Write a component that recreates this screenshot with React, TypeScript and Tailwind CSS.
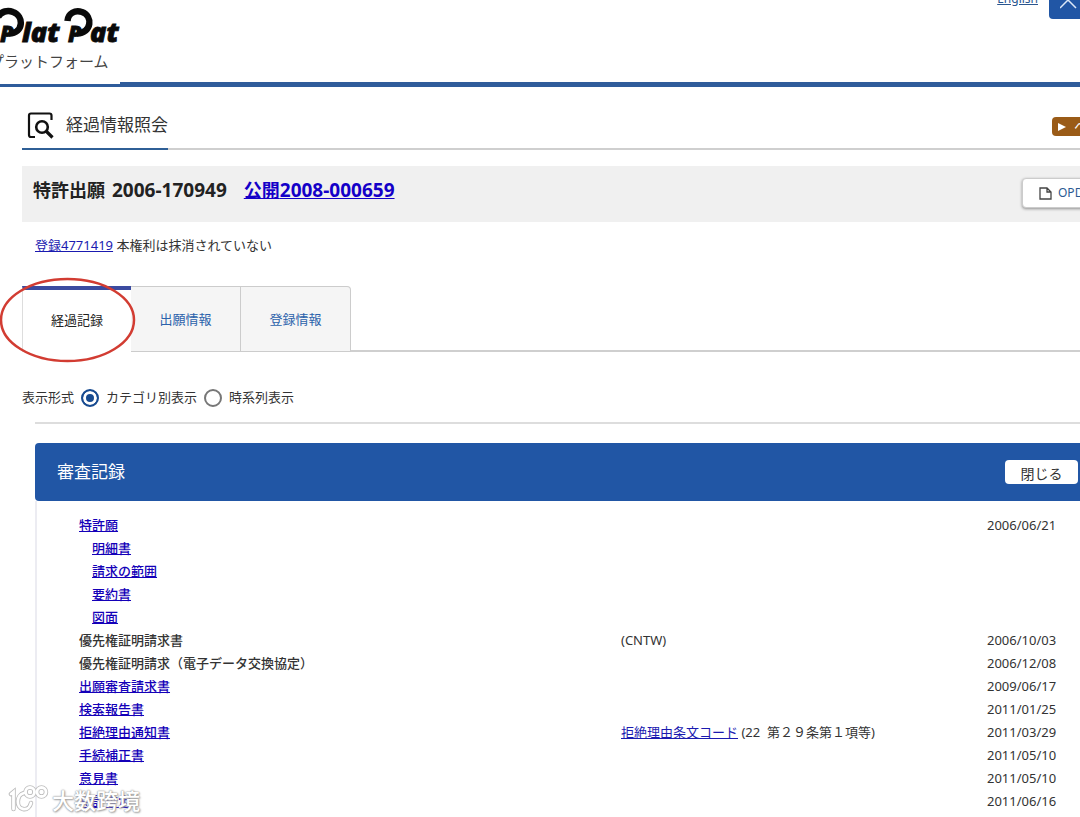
import { useState } from "react";

type RecordRow = {
  name: string;
  href?: string;
  indent?: boolean;
  code?: string;
  note?: string;
  date?: string;
};

const records: RecordRow[] = [
  { name: "特許願", href: "#application", date: "2006/06/21" },
  { name: "明細書", href: "#description", indent: true },
  { name: "請求の範囲", href: "#claims", indent: true },
  { name: "要約書", href: "#abstract", indent: true },
  { name: "図面", href: "#drawings", indent: true },
  { name: "優先権証明請求書", note: "(CNTW)", date: "2006/10/03" },
  { name: "優先権証明請求（電子データ交換協定）", date: "2006/12/08" },
  { name: "出願審査請求書", href: "#exam", date: "2009/06/17" },
  { name: "検索報告書", href: "#search", date: "2011/01/25" },
  {
    name: "拒絶理由通知書",
    href: "#refusal",
    code: "拒絶理由条文コード",
    note: " (22  第２９条第１項等)",
    date: "2011/03/29",
  },
  { name: "手続補正書", href: "#amendment", date: "2011/05/10" },
  { name: "意見書", href: "#opinion", date: "2011/05/10" },
  { name: "特許査定", href: "#grant", date: "2011/06/16" },
];

const tabs = ["経過記録", "出願情報", "登録情報"];
const modes = ["カテゴリ別表示", "時系列表示"];

function Logo() {
  return (
    <div className="h-[84px] w-[120px] overflow-hidden bg-white">
      <svg viewBox="0 0 120 49" className="block h-[49px] w-[120px]" role="img" aria-label="PlatPat">
        <g fill="none" stroke="#0a0a0a" strokeWidth="6.500">
          <path d="M-2 17 C1 11 8 10 13 12 C24 16 24 33 9 33.500" />
          <path d="M67.500 21 C68 13 75 10 82 12 C93 16 92 33 77 33.500" />
        </g>
        <g
          fill="#0a0a0a"
          stroke="#0a0a0a"
          strokeWidth="0.800"
          fontSize="27"
          fontWeight="900"
          fontStyle="italic"
          fontFamily="'Noto Sans','Open Sans',sans-serif"
        >
          <text x="0" y="42" fontSize="22">P</text>
          <text x="22" y="42">lat</text>
          <text x="68" y="42" fontSize="22">P</text>
          <text x="90" y="42">at</text>
        </g>
      </svg>
      <p className="-ml-[11px] whitespace-nowrap text-[15px] leading-6 text-[#444]">プラットフォーム</p>
    </div>
  );
}

function Header() {
  return (
    <header className="flex h-[87px] items-start border-b-[5px] border-[#2f5c9b]">
      <Logo />
      <div className="ml-auto flex items-start gap-[11px]">
        <a href="#english" className="-mt-[9px] text-[12px] leading-4 text-[#2b568f] underline">
          English
        </a>
        <button
          type="button"
          aria-label="トップへ"
          className="flex h-[19px] w-[31px] items-start overflow-hidden rounded-bl bg-[#2156a5] pl-[11px]"
        >
          <svg viewBox="0 0 18 10" className="h-[10px] w-[18px] shrink-0" fill="none" stroke="#dce8f8" strokeWidth="1.5">
            <path d="M0 8 L8 0 L16 8" />
          </svg>
        </button>
      </div>
    </header>
  );
}

function TitleBar() {
  return (
    <div className="flex h-[63px] items-start border-b-2 border-[#cfcfcf]">
      <h1 className="flex h-[63px] items-center gap-3 border-b-2 border-[#2f5f96] pl-[5px] pt-[15px] text-[17px] text-[#333]">
        <svg viewBox="0 0 27 27" className="size-[27px]" fill="none" stroke="#111" strokeWidth="2.200">
          <path d="M8 25 H4 Q2 25 2 23 V3.500 Q2 1.500 4 1.500 H22.500 Q24.500 1.500 24.500 3.500 V8" />
          <circle cx="15" cy="15" r="5.800" strokeWidth="2.600" />
          <path d="M19 19 L25.500 25.500" strokeWidth="3.200" />
        </svg>
        経過情報照会
      </h1>
      <button
        type="button"
        className="-mr-10 ml-auto mt-[30px] flex h-[19px] w-[68px] items-center gap-2 overflow-hidden whitespace-nowrap rounded bg-[#9a5b17] pl-[6px] text-[13px] text-white"
      >
        <svg viewBox="0 0 8 8" className="size-2 shrink-0" fill="#fff">
          <path d="M0 0 L8 4 L0 8 Z" />
        </svg>
        ヘルプ
      </button>
    </div>
  );
}

function Watermark() {
  return (
    <div className="pointer-events-none absolute bottom-1 left-[8px] flex h-[32px] items-center gap-[2px]">
      <svg viewBox="0 0 42 32" className="h-8 w-[42px]" fill="none" strokeLinecap="round">
        {["#bdbdbd", "#ffffff"].map((color, i) => (
          <g key={color} stroke={color} strokeWidth={i === 0 ? 4.5 : 2.8}>
            <path d="M3 10 L5.500 8 V25" />
            <path d="M16 9 C8 11 8 24 15 25 C19 26 22 23 23 19" />
            <circle cx="22" cy="8" r="4.500" />
            <circle cx="33.500" cy="8" r="4.500" />
          </g>
        ))}
      </svg>
      <span className="text-[22px] font-medium leading-8 text-white [text-shadow:0_0_1px_#999,0_0_2px_#999,1px_1px_2px_#aaa]">
        大数跨境
      </span>
    </div>
  );
}

export default function App() {
  const [tab, setTab] = useState(0);
  const [mode, setMode] = useState(0);
  const [open, setOpen] = useState(true);

  return (
    <div className="relative min-h-screen overflow-hidden bg-white font-['Noto_Sans','Noto_Sans_CJK_JP',sans-serif] text-[13px] text-[#333]">
      <Header />
      <main className="pl-[22px]">
        <TitleBar />

        <section className="mt-4 flex h-14 items-start bg-[#f0f0f0] pl-[11px]">
          <h2 className="flex items-baseline pt-[10px] text-[18px] font-bold leading-7 text-[#222]">
            特許出願
            <span className="ml-[7px] text-[19px]">2006-170949</span>
            <a href="#publication" className="ml-[17px] text-[#1400c8] underline">
              公開<span className="text-[19px]">2008-000659</span>
            </a>
          </h2>
          <button
            type="button"
            className="-mr-12 ml-auto mt-3 flex h-[30px] w-[106px] items-center gap-[6px] whitespace-nowrap rounded border border-[#ccc] bg-white pl-4 text-[12px] text-[#2b5a92] shadow-[0_1px_3px_rgba(0,0,0,0.4)]"
          >
            <svg viewBox="0 0 13 13" className="size-[13px] shrink-0" fill="none" stroke="#444" strokeWidth="1.300">
              <path d="M1 1 H8 L12 5 V12 H1 Z M8 1 V5 H12" />
            </svg>
            OPD照会
          </button>
        </section>

        <p className="mt-[13px] pl-[13px] leading-5">
          <a href="#registration" className="text-[#1a1ab0] underline">
            登録4771419
          </a>{" "}
          本権利は抹消されていない
        </p>

        <div className="relative mt-[31px] flex border-b-2 border-[#cfcfcf]" role="tablist">
          {tabs.map((label, i) => (
            <button
              key={label}
              type="button"
              role="tab"
              aria-selected={tab === i}
              onClick={() => setTab(i)}
              className={
                tab === i
                  ? "-mb-[2px] h-[66px] w-[109px] border-l border-t-4 border-l-[#ddd] border-t-[#3b4ba0] bg-white text-[#222]"
                  : "-mb-[2px] h-[66px] w-[110px] border border-l-0 border-[#ccc] bg-[#f5f5f5] pt-[2px] text-[#2b62ab] last-of-type:rounded-tr"
              }
            >
              {label}
            </button>
          ))}
          <svg
            viewBox="0 0 138 86"
            className="pointer-events-none absolute -left-[23px] -top-[9px] h-[86px] w-[138px]"
            fill="none"
            aria-hidden="true"
          >
            <ellipse cx="68.500" cy="43" rx="66.500" ry="41" stroke="#d23c32" strokeWidth="2.500" />
          </svg>
        </div>

        <fieldset className="mt-[34px] flex h-6 items-center">
          <legend className="sr-only">表示形式の選択</legend>
          <span className="mr-[7px]">表示形式</span>
          {modes.map((label, i) => (
            <label key={label} className="mr-[7px] flex items-center gap-[7px]">
              <input
                type="radio"
                name="mode"
                checked={mode === i}
                onChange={() => setMode(i)}
                className="size-[18px] appearance-none rounded-full border-2 border-[#777] bg-white checked:border-[#174a90] checked:bg-[#174a90] checked:shadow-[inset_0_0_0_3px_#fff]"
              />
              {label}
            </label>
          ))}
        </fieldset>

        <section className="ml-[13px] mt-3 border-t-2 border-[#ddd] pt-[19px]">
          <div className="flex h-[58px] items-center rounded-l-sm bg-[#2156a5] pl-[22px] pr-[2px]">
            <h3 className="text-[17px] text-white">審査記録</h3>
            <button
              type="button"
              onClick={() => setOpen(!open)}
              className="ml-auto h-6 w-[73px] rounded-sm bg-white pt-[3px] text-[14px] leading-5 text-[#333]"
            >
              閉じる
            </button>
          </div>
          {open && (
            <div className="border-l-2 border-[#ececf2] pb-2 pl-[42px] pt-3">
              <table className="w-full table-fixed text-left">
                <colgroup>
                  <col />
                  <col className="w-[366px]" />
                  <col className="w-[93px]" />
                </colgroup>
                <tbody>
                  {records.map((row) => (
                    <tr key={row.name} className="h-[23px]">
                      <td className={row.indent ? "p-0 pl-[13px] font-medium leading-5" : "p-0 font-medium leading-5"}>
                        {row.href ? (
                          <a href={row.href} className="text-[#1400b8] underline">
                            {row.name}
                          </a>
                        ) : (
                          row.name
                        )}
                      </td>
                      <td className="whitespace-pre p-0 leading-5">
                        {row.code && (
                          <a href="#code" className="text-[#1a1ab0] underline">
                            {row.code}
                          </a>
                        )}
                        {row.note}
                      </td>
                      <td className="p-0 leading-5">{row.date}</td>
                    </tr>
                  ))}
                </tbody>
              </table>
            </div>
          )}
        </section>
      </main>
      <Watermark />
    </div>
  );
}
